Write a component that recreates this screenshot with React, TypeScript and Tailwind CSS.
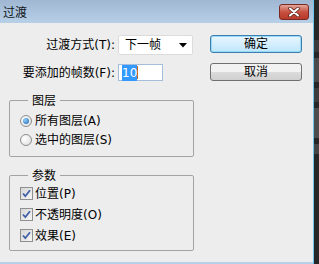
import React from 'react';

const Radio: React.FC<{ checked?: boolean }> = ({ checked }) => (
  <span className="w-[12px] h-[12px] rounded-full border border-[#8d8d8d] bg-[radial-gradient(circle_at_35%_35%,#ffffff,#dcdcdc)] flex items-center justify-center shrink-0">
    {checked && (
      <span className="w-[6px] h-[6px] rounded-full bg-[radial-gradient(circle_at_35%_35%,#8fd0ff,#1a62a8)]" />
    )}
  </span>
);

const Check: React.FC = () => (
  <span className="w-[13px] h-[13px] border border-[#8e8f8f] bg-[linear-gradient(135deg,#d6d6d6,#f6f6f6)] flex items-center justify-center shrink-0">
    <svg width="11" height="11" viewBox="0 0 11 11">
      <path d="M2 5.5 L4.3 8.2 L9 2.2" fill="none" stroke="#3f5fa8" strokeWidth="1.8" />
    </svg>
  </span>
);

const App: React.FC = () => {
  return (
    <div className="w-[319px] h-[264px] flex bg-[#262626] overflow-hidden font-['DejaVu_Sans','Noto_Sans_CJK_SC',sans-serif] text-[12px] leading-[16px] text-black">
      <div className="w-[314px] h-full flex flex-col border-r border-[#6cc4ea]">
        {/* title bar */}
        <div className="h-[23px] flex items-center bg-[linear-gradient(#9fb7d2,#b8cfe8)]">
          <span className="ml-[3px] text-[12px] text-[#101820] font-['Noto_Sans_CJK_SC',sans-serif]">过渡</span>
          <button className="ml-auto mr-[4px] w-[30px] h-[16px] rounded-[3px] border border-[#7a2a22] bg-[linear-gradient(#e3a69a,#c7503f_50%,#b8392a)] flex items-center justify-center">
            <svg width="14" height="10" viewBox="0 0 14 10">
              <path d="M3 1.5 L11 8.5 M11 1.5 L3 8.5" stroke="#5b2620" strokeWidth="3.6" strokeLinecap="round" />
              <path d="M3 1.5 L11 8.5 M11 1.5 L3 8.5" stroke="#ffffff" strokeWidth="2" strokeLinecap="round" />
            </svg>
          </button>
        </div>

        {/* body */}
        <div className="flex-1 bg-[#ededed] flex pl-[9px] pt-[12px]">
          <div className="w-[185px] flex flex-col">
            <div className="grid grid-cols-[106px_auto] gap-x-[3px] gap-y-[9px] items-center">
              <span className="text-right">过渡方式(T):</span>
              <div className="w-[75px] h-[20px] bg-white border border-[#dcdcdc] rounded-[2px] flex items-center pl-[6px] pr-[5px]">
                <span>下一帧</span>
                <svg className="ml-auto" width="8" height="5" viewBox="0 0 8 5">
                  <path d="M0 0 H8 L4 4.5 Z" fill="#000" />
                </svg>
              </div>
              <span className="text-right">要添加的帧数(F):</span>
              <div className="w-[45px] h-[17px] bg-white border border-[#a4bdd8] flex items-center pl-[3px]">
                <span className="bg-[#3399ff] text-white">10</span>
                <span className="w-[1px] h-[13px] bg-[#c86a20]" />
              </div>
            </div>

            <fieldset className="mt-[11px] border border-[#a3a3a3] rounded-[2px] pl-[10px] pb-[7px]">
              <legend className="ml-[8px] px-[4px] font-['Noto_Sans_CJK_SC',sans-serif]">图层</legend>
              <div className="h-[19px] mt-[3px] flex items-center gap-[3px]">
                <Radio checked />
                <span>所有图层(A)</span>
              </div>
              <div className="h-[19px] flex items-center gap-[3px]">
                <Radio />
                <span>选中的图层(S)</span>
              </div>
            </fieldset>

            <fieldset className="mt-[10px] border border-[#a3a3a3] rounded-[2px] pl-[10px] pb-[4px]">
              <legend className="ml-[8px] px-[4px] font-['Noto_Sans_CJK_SC',sans-serif]">参数</legend>
              <div className="h-[21px] flex items-center gap-[2px]">
                <Check />
                <span>位置(P)</span>
              </div>
              <div className="h-[21px] flex items-center gap-[2px]">
                <Check />
                <span>不透明度(O)</span>
              </div>
              <div className="h-[21px] flex items-center gap-[2px]">
                <Check />
                <span>效果(E)</span>
              </div>
            </fieldset>
          </div>

          <div className="ml-[16px] w-[92px] flex flex-col">
            <button className="h-[18px] rounded-[3px] border border-[#3c7fb1] bg-[linear-gradient(#eaf6fd,#bee6fd)] shadow-[inset_0_0_0_1px_#97d9f7] flex items-center justify-center">
              确定
            </button>
            <button className="mt-[10px] h-[18px] rounded-[3px] border border-[#707070] bg-[linear-gradient(#f2f2f2_50%,#dcdcdc_50%,#cfcfcf)] flex items-center justify-center">
              取消
            </button>
          </div>
        </div>

        <div className="h-[2px] bg-[#b7cfe8]" />
      </div>

      <div className="flex-1 flex flex-col gap-[6px] pt-[40px]">
        <div className="h-[12px] bg-[#3a3a3a]" />
        <div className="h-[24px] bg-[#4a4a4a]" />
        <div className="h-[14px] bg-[#3c3c3c]" />
        <div className="h-[30px] bg-[#4d4d4d]" />
        <div className="h-[10px] bg-[#444444]" />
      </div>
    </div>
  );
};

export default App;
